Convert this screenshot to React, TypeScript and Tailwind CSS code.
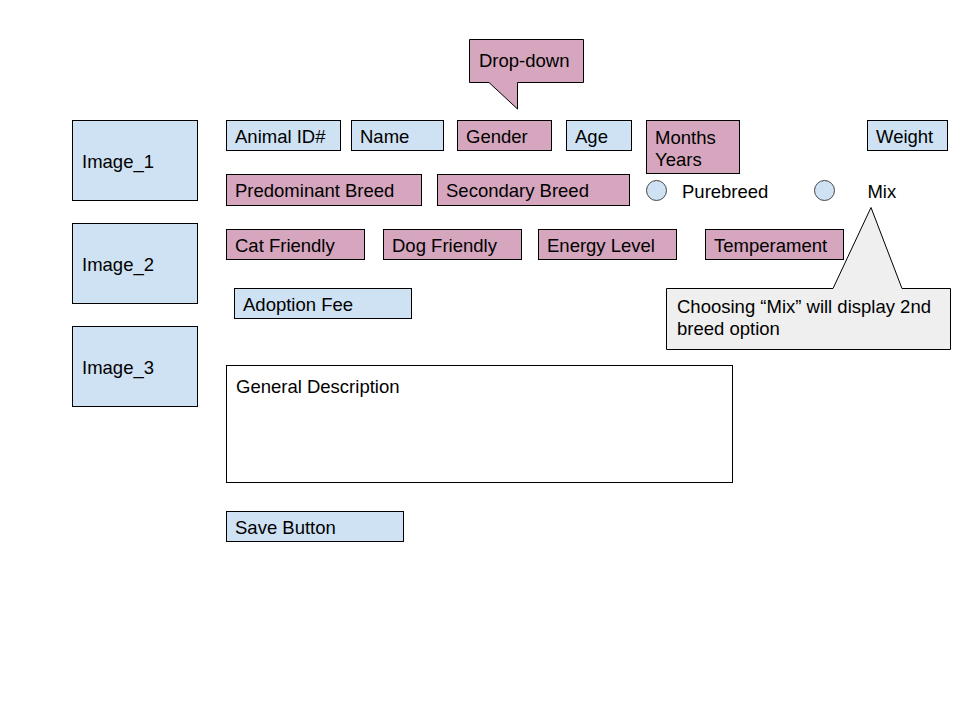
import React from "react";

const blue = "bg-[#cfe2f3]";
const pink = "bg-[#d5a6bd]";

type BoxProps = {
  label: string;
  className: string;
};

// Single-line field placeholder from the wireframe
const Field = ({ label, className }: BoxProps) => (
  <div className={`flex items-center border border-black pl-[8px] pt-[2px] whitespace-nowrap ${className}`}>
    {label}
  </div>
);

const Radio = ({ label, className }: { label: string; className: string }) => (
  <div className={`flex items-center ${className}`}>
    <span className="w-[21px] h-[21px] rounded-full border border-[#444] bg-[#cfe2f3]" />
    <span className="pt-[3px]">{label}</span>
  </div>
);

const App = () => {
  return (
    <div
      className="relative w-[960px] h-[720px] bg-white text-black text-[18.5px] leading-[22px] overflow-hidden"
      style={{ fontFamily: '"Liberation Sans", Arial, sans-serif' }}
    >
      <div className="flex pt-[120px] pl-[72px]">
        {/* image placeholders */}
        <div className="flex flex-col gap-[22px] w-[126px]">
          {["Image_1", "Image_2", "Image_3"].map((img) => (
            <div key={img} className={`h-[81px] flex items-center pl-[9px] pt-[2px] border border-black ${blue}`}>
              {img}
            </div>
          ))}
        </div>

        {/* form area */}
        <div className="ml-[28px] flex flex-col">
          <div className="flex items-start h-[54px]">
            <Field label="Animal ID#" className={`w-[115px] h-[31px] ${blue}`} />
            <Field label="Name" className={`ml-[10px] w-[93px] h-[31px] ${blue}`} />
            <Field label="Gender" className={`ml-[13px] w-[95px] h-[31px] ${pink}`} />
            <Field label="Age" className={`ml-[14px] w-[66px] h-[31px] ${blue}`} />
            <div className={`ml-[14px] w-[94px] h-[54px] border border-black pl-[8px] pt-[6px] ${pink}`}>
              Months
              <br />
              Years
            </div>
            <Field label="Weight" className={`ml-[127px] w-[81px] h-[31px] ${blue}`} />
          </div>

          <div className="flex items-center h-[32px]">
            <Field label="Predominant Breed" className={`w-[196px] h-[32px] ${pink}`} />
            <Field label="Secondary Breed" className={`ml-[15px] w-[193px] h-[32px] ${pink}`} />
            <Radio label="Purebreed" className="ml-[16px] gap-[15px]" />
            <Radio label="Mix" className="ml-[46px] gap-[32px]" />
          </div>

          <div className="flex mt-[23px]">
            <Field label="Cat Friendly" className={`w-[139px] h-[31px] ${pink}`} />
            <Field label="Dog Friendly" className={`ml-[18px] w-[139px] h-[31px] ${pink}`} />
            <Field label="Energy Level" className={`ml-[16px] w-[139px] h-[31px] ${pink}`} />
            <Field label="Temperament" className={`ml-[28px] w-[139px] h-[31px] ${pink}`} />
          </div>

          <Field label="Adoption Fee" className={`mt-[28px] ml-[8px] w-[178px] h-[31px] ${blue}`} />

          <div className="mt-[46px] w-[507px] h-[118px] border border-black pl-[9px] pt-[10px]">
            General Description
          </div>

          <Field label="Save Button" className={`mt-[28px] w-[178px] h-[31px] ${blue}`} />
        </div>
      </div>

      {/* "Drop-down" callout */}
      <div className="absolute left-[469px] top-[39px] w-[115px] h-[71px]">
        <svg className="absolute inset-0" width="115" height="71" viewBox="0 0 115 71">
          <path
            d="M0.5 0.5 H114.5 V43.5 H48.5 V70 L20 43.5 H0.5 Z"
            fill="#d5a6bd"
            stroke="#000"
            strokeWidth="1"
          />
        </svg>
        <div className="relative h-[44px] flex items-center pl-[10px]">Drop-down</div>
      </div>

      {/* "Mix" note callout */}
      <div className="absolute left-[666px] top-[207px] w-[285px] h-[143px]">
        <svg className="absolute inset-0" width="285" height="143" viewBox="0 0 285 143">
          <path
            d="M0.5 81.5 H167 L205 0.5 L236 81.5 H284.5 V142.5 H0.5 Z"
            fill="#efefef"
            stroke="#000"
            strokeWidth="1"
          />
        </svg>
        <div className="relative mt-[81px] pl-[11px] pt-[8px] pr-[8px]">
          Choosing “Mix” will display 2nd breed option
        </div>
      </div>
    </div>
  );
};

export default App;
